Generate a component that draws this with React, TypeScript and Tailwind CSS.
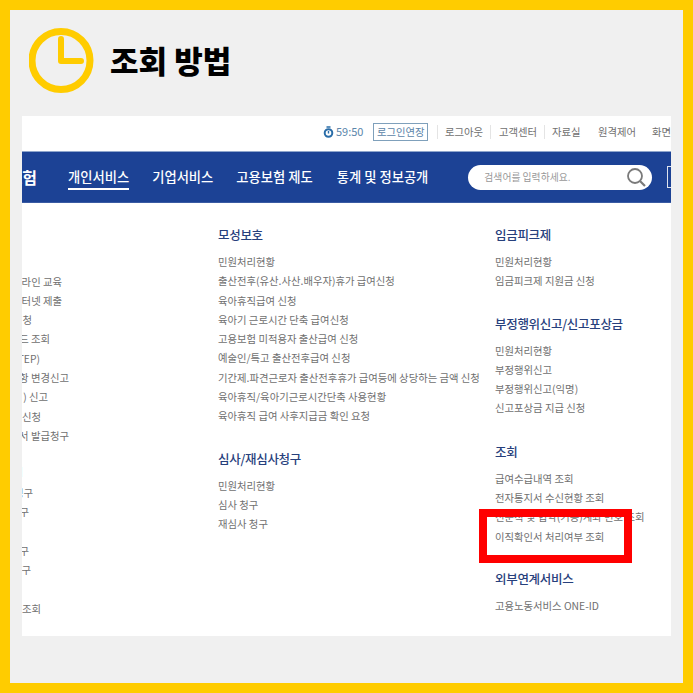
import React from "react";

const col1: { text: string; w: string }[] = [
  { text: "온라인 교육", w: "w-[40px]" },
  { text: "인터넷 제출", w: "w-[40px]" },
  { text: "신청", w: "w-[10px]" },
  { text: "코드 조회", w: "w-[28px]" },
  { text: "(STEP)", w: "w-[18px]" },
  { text: "사항 변경신고", w: "w-[47px]" },
  { text: "(  ) 신고", w: "w-[26px]" },
  { text: "급여 신청", w: "w-[19px]" },
  { text: "증명서 발급청구", w: "w-[47px]" },
];
const col1b: { text: string; w: string; cls: string }[] = [
  { text: "조회", w: "w-[1px]", cls: "mt-[17px]" },
  { text: "재심사 청구", w: "w-[11px]", cls: "mt-[1.5px]" },
  { text: "심사 청구", w: "w-[7px]", cls: "" },
  { text: "심사 청구", w: "w-[7px]", cls: "mt-[19.3px]" },
  { text: "재심사 청구", w: "w-[9px]", cls: "" },
  { text: "현황 조회", w: "w-[19px]", cls: "mt-[19.3px]" },
];

function Row({ text }: { text: string }) {
  return <div className="h-[19.3px] leading-[19.3px] whitespace-nowrap text-[10.35px] text-[#707070]">{text}</div>;
}

function Section({ title, items, cls }: { title: string; items: string[]; cls?: string }) {
  return (
    <div className={cls}>
      <div className="h-[20px] leading-[20px] mb-[7px] whitespace-nowrap text-[12.5px] font-medium text-[#27407c] tracking-[-0.3px]">{title}</div>
      {items.map((t) => (
        <Row key={t} text={t} />
      ))}
    </div>
  );
}

export default function App() {
  return (
    <div className="w-[693px] h-[693px] border-[10px] border-[#ffcc00] bg-[#f0f0f0] font-['Noto_Sans_CJK_KR','Noto_Sans',sans-serif] overflow-hidden">
      <div className="h-[106px] flex pl-[19px] pt-[18px]">
        <svg width="65" height="65" viewBox="0 0 65 65" fill="none" className="shrink-0">
          <circle cx="32" cy="32.5" r="29" stroke="#ffcc00" strokeWidth="7" />
          <path d="M32 11V33H52" stroke="#ffcc00" strokeWidth="6" strokeLinecap="round" strokeLinejoin="round" />
        </svg>
        <div className="ml-[16px] h-[65px] leading-[63px] text-[31px] font-black text-black whitespace-nowrap">조회 방법</div>
      </div>

      <div className="relative ml-[12px] w-[649px] h-[520px] bg-white overflow-hidden">
        <div className="h-[35px] pb-[4px] flex items-center pl-[301px] text-[10.35px] text-[#707070] whitespace-nowrap">
          <svg width="11" height="12" viewBox="0 0 11 12" fill="none" className="shrink-0">
            <circle cx="5.5" cy="7" r="3.8" stroke="#2a6da8" strokeWidth="2" />
            <path d="M3.5 1H7.5M5.5 5V7.5" stroke="#2a6da8" strokeWidth="1.4" />
          </svg>
          <span className="ml-[2px] w-[38.5px] text-[#5b86ab] text-[11px]">59:50</span>
          <span className="w-[56px] h-[18px] leading-[15px] border border-[#7fa0bb] text-center text-[#5b84a8]">로그인연장</span>
          <span className="ml-[9px] w-px h-[14px] bg-[#e4e4e4]" />
          <span className="ml-[7px] w-[38px]">로그아웃</span>
          <span className="ml-[7px] w-px h-[14px] bg-[#e4e4e4]" />
          <span className="ml-[8px] w-[37px]">고객센터</span>
          <span className="ml-[8px] w-px h-[14px] bg-[#e4e4e4]" />
          <span className="ml-[7px] w-[28px]">자료실</span>
          <span className="ml-[18px] w-[37px]">원격제어</span>
          <span className="ml-[17px]">화면</span>
        </div>

        <div className="h-[52px] bg-[#1c4295] border-t border-t-[#8fa6cc] border-b border-b-[#3a5ba3] flex items-center whitespace-nowrap text-white">
          <div className="w-[15px] flex justify-end text-[16px] font-bold">
            <span className="shrink-0">고용보험</span>
          </div>
          <div className="relative ml-[31px] text-[13.3px] font-medium">
            개인서비스
            <span className="absolute left-0 right-0 top-[21px] h-[2px] bg-white" />
          </div>
          <div className="ml-[23px] text-[13.3px] font-medium">기업서비스</div>
          <div className="ml-[23px] text-[13.3px] font-medium">고용보험 제도</div>
          <div className="ml-[24px] text-[13.3px] font-medium">통계 및 정보공개</div>
          <div className="ml-[40px] w-[184px] h-[25px] rounded-full bg-white flex items-center pl-[16px] pr-[6px] justify-between shrink-0">
            <span className="text-[9.8px] text-[#999]">검색어를 입력하세요.</span>
            <svg width="20" height="20" viewBox="0 0 20 20" fill="none">
              <circle cx="9" cy="9" r="7" stroke="#7a7a7a" strokeWidth="1.8" />
              <path d="M14 14L19 19" stroke="#7a7a7a" strokeWidth="2.2" />
            </svg>
          </div>
          <div className="ml-[15px] w-[20px] h-[22px] border border-[#dde3ee] shrink-0" />
        </div>

        <div className="flex">
          <div className="w-[196px] shrink-0 pt-[68.5px]">
            {col1.map((r) => (
              <div key={r.text} className={`${r.w} h-[19.3px] leading-[19.3px] flex justify-end text-[10.35px] text-[#707070] whitespace-nowrap`}>
                <span className="shrink-0">{r.text}</span>
              </div>
            ))}
            {col1b.map((r, i) => (
              <div key={i} className={`${r.w} ${r.cls} h-[19.3px] leading-[19.3px] flex justify-end text-[10.35px] text-[#707070] whitespace-nowrap`}>
                <span className="shrink-0">{r.text}</span>
              </div>
            ))}
          </div>
          <div className="w-[277px] shrink-0 pt-[22px]">
            <Section
              title="모성보호"
              items={[
                "민원처리현황",
                "출산전후(유산.사산.배우자)휴가 급여신청",
                "육아휴직급여 신청",
                "육아기 근로시간 단축 급여신청",
                "고용보험 미적용자 출산급여 신청",
                "예술인/특고 출산전후급여 신청",
                "기간제.파견근로자 출산전후휴가 급여등에 상당하는 금액 신청",
                "육아휴직/육아기근로시간단축 사용현황",
                "육아휴직 급여 사후지급금 확인 요청",
              ]}
            />
            <Section cls="mt-[23px]" title="심사/재심사청구" items={["민원처리현황", "심사 청구", "재심사 청구"]} />
          </div>
          <div className="pt-[22px]">
            <Section title="임금피크제" items={["민원처리현황", "임금피크제 지원금 신청"]} />
            <Section cls="mt-[23px]" title="부정행위신고/신고포상금" items={["민원처리현황", "부정행위신고", "부정행위신고(익명)", "신고포상금 지급 신청"]} />
            <Section cls="mt-[24px]" title="조회" items={["급여수급내역 조회", "전자통지서 수신현황 조회", "전문직 및 협약(기능)계좌 번호 조회", "이직확인서 처리여부 조회"]} />
            <Section cls="mt-[23px]" title="외부연계서비스" items={["고용노동서비스 ONE-ID"]} />
          </div>
        </div>

        <div className="absolute left-[457px] top-[393px] w-[153px] h-[54px] border-[8px] border-[#ff0000]" />
      </div>
    </div>
  );
}
